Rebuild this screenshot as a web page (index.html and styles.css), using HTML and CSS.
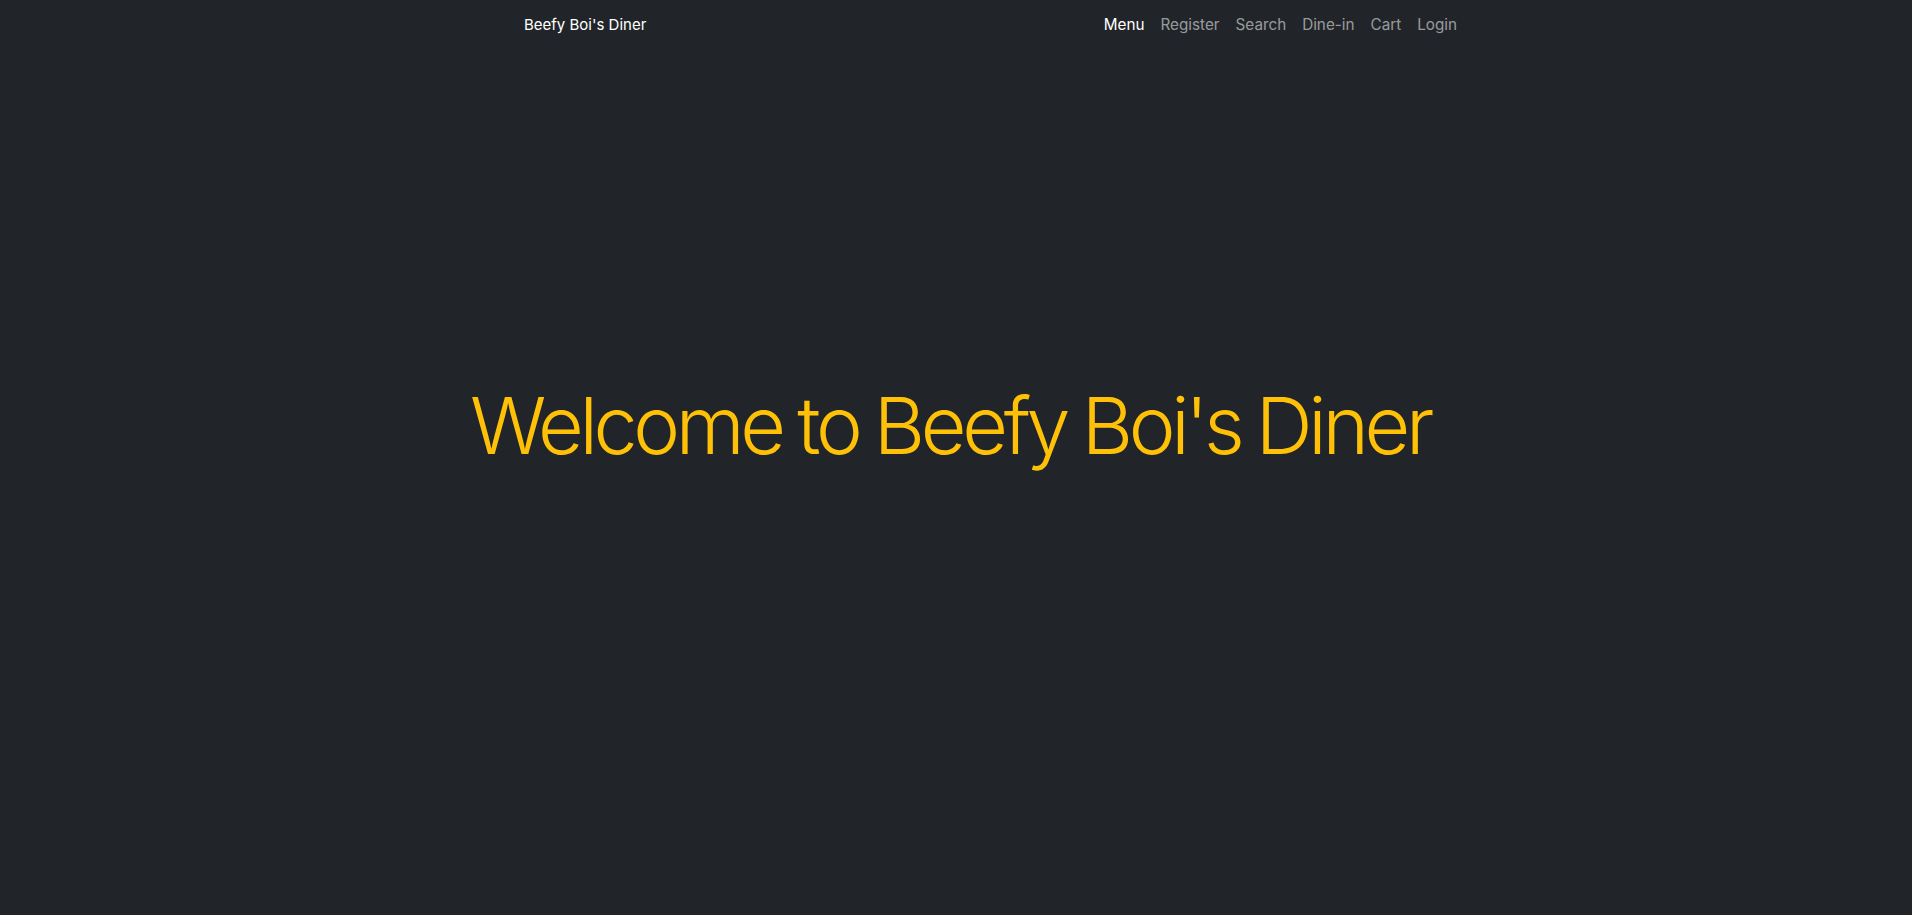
FILE: index.html
```html
<!DOCTYPE html>
<html lang="en">
<head>
<meta charset="utf-8">
<title>Beefy Boi's Diner</title>
<link rel="stylesheet" href="styles.css">
</head>
<body>
<nav class="navbar">
  <div class="nav-container">
    <a class="brand" href="#">Beefy Boi's Diner</a>
    <ul class="nav-links">
      <li><a class="nav-link active" href="#">Menu</a></li>
      <li><a class="nav-link" href="#">Register</a></li>
      <li><a class="nav-link" href="#">Search</a></li>
      <li><a class="nav-link" href="#">Dine-in</a></li>
      <li><a class="nav-link" href="#">Cart</a></li>
      <li><a class="nav-link" href="#">Login</a></li>
    </ul>
  </div>
</nav>
<main class="hero">
  <h1 class="display">Welcome to Beefy Boi's Diner</h1>
</main>
</body>
</html>
```
FILE: styles.css
```css
html, body {
  margin: 0;
  padding: 0;
}
body {
  background: #212529;
  height: 915px;
  font-family: Inter, "Liberation Sans", sans-serif;
  color: #fff;
  overflow: hidden;
}
a { text-decoration: none; }
.navbar {
  padding: 5px 0 11px;
}
.nav-container {
  width: 933px;
  margin-left: calc(50% - 432px);
  display: flex;
  align-items: center;
  justify-content: space-between;
}
.brand {
  color: #fff;
  font-size: 15px;
  line-height: 24px;
  padding: 8px 0;
}
.nav-links {
  list-style: none;
  margin: 0;
  padding: 0;
  display: flex;
}
.nav-link {
  display: block;
  padding: 8px 8px;
  font-size: 15.25px;
  line-height: 24px;
  color: rgba(255, 255, 255, 0.55);
}
.nav-links li:last-child .nav-link { padding-right: 0; }
.nav-link.active { color: #fff; }
.hero {
  display: flex;
  justify-content: center;
  padding: 322px 12px 0 0;
}
.display {
  margin: 0;
  font-family: Inter, Roboto, sans-serif;
  font-size: 79px;
  font-weight: 300;
  line-height: 1.2;
  letter-spacing: -0.055em;
  word-spacing: -0.03em;
  color: #ffc107;
}
```
